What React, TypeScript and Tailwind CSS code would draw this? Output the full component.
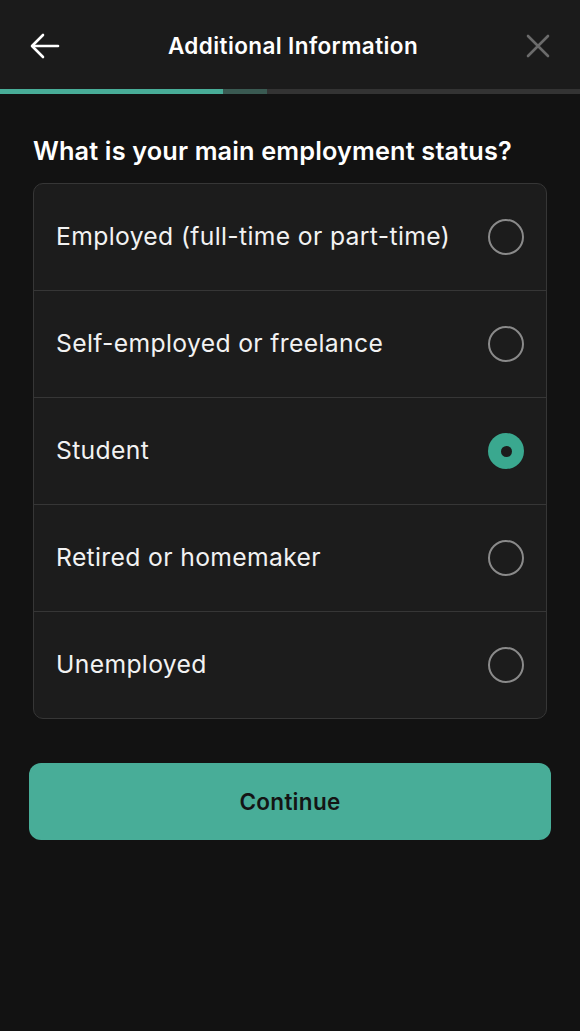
import { useState } from "react";

const options = [
  "Employed (full-time or part-time)",
  "Self-employed or freelance",
  "Student",
  "Retired or homemaker",
  "Unemployed",
];

export default function App() {
  const [selected, setSelected] = useState(2);

  return (
    <div className="min-h-[1031px] w-full bg-[#121212] text-white" style={{ fontFamily: "Inter, 'Noto Sans', sans-serif" }}>
      {/* header */}
      <div className="flex h-[89px] items-center justify-between bg-[#1b1b1b] px-[30px] pt-[3px]">
        <svg width="30" height="26" viewBox="0 0 30 26" fill="none" stroke="white" strokeWidth="2.6" strokeLinecap="round" strokeLinejoin="round">
          <path d="M28 13H3" />
          <path d="M13 2L2 13l11 11" />
        </svg>
        <h1 className="text-[22.5px] font-semibold tracking-[0.4px]">Additional Information</h1>
        <svg width="24" height="24" viewBox="0 0 24 24" fill="none" stroke="#6b6b6b" strokeWidth="2.6" strokeLinecap="round">
          <path d="M2 2l20 20M22 2L2 22" />
        </svg>
      </div>

      {/* progress */}
      <div className="flex h-[5px] w-full bg-[#333333]">
        <div className="h-full w-[223px] bg-[#48ad98]" />
        <div className="h-full w-[44px] bg-[#3a5a52]" />
      </div>

      <div className="px-[33px] pt-[40px]">
        <h2 className="text-[25.3px] font-semibold leading-[33px] tracking-[0.15px]">What is your main employment status?</h2>

        <div className="mt-[16px] overflow-hidden rounded-[10px] border border-[#363636] bg-[#1c1c1c]">
          {options.map((opt, i) => (
            <button
              key={opt}
              onClick={() => setSelected(i)}
              className={
                "flex w-full items-center justify-between pl-[22px] pr-[22px] text-left " +
                (i > 0 ? "h-[107px] border-t border-[#363636]" : "h-[106px]")
              }
            >
              <span className="text-[24.7px] tracking-[0.35px] text-[#f2f2f2]">{opt}</span>
              {selected === i ? (
                <span className="flex h-[36px] w-[36px] items-center justify-center rounded-full bg-[#3aa88f]">
                  <span className="h-[11px] w-[11px] rounded-full bg-[#1c1c1c]" />
                </span>
              ) : (
                <span className="h-[36px] w-[36px] rounded-full border-2 border-[#8a8a8a]" />
              )}
            </button>
          ))}
        </div>
      </div>

      <div className="px-[29px] pt-[44px]">
        <button className="flex h-[77px] w-full items-center justify-center rounded-[12px] bg-[#48ad98] text-[22.5px] font-semibold tracking-[0.3px] text-[#141414]">
          Continue
        </button>
      </div>
    </div>
  );
}
